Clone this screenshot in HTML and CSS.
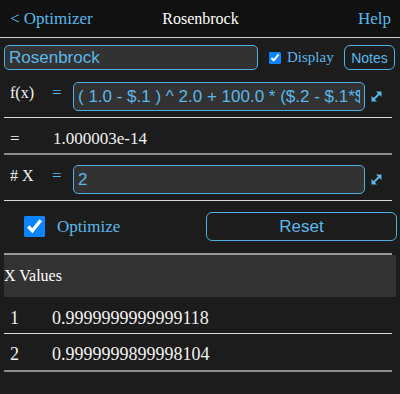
FILE: index.html
```html
<!DOCTYPE html>
<html>
<head>
<meta charset="utf-8">
<link rel="stylesheet" href="styles.css">
</head>
<body>
<header class="topbar">
  <a class="nav back">&lt; Optimizer</a>
  <span class="title">Rosenbrock</span>
  <a class="nav help">Help</a>
</header>
<main class="content">
  <div class="name-row">
    <input class="text-input name-input" type="text" value="Rosenbrock">
    <input class="display-check" type="checkbox" checked>
    <span class="display-label">Display</span>
    <button class="btn notes-btn">Notes</button>
  </div>
  <div class="field-row fx-row">
    <span class="label">f(x)</span>
    <span class="eq">=</span>
    <input class="text-input field-input" type="text" value="( 1.0 - $.1 ) ^ 2.0 + 100.0 * ($.2 - $.1*$.1) ^ 2.0">
    <span class="expand"><svg width="13" height="13" viewBox="0 0 13 13"><path d="M3.5 9.5 L9.5 3.5" stroke="#5bb8ea" stroke-width="1.8"/><path d="M11.5 1.5 V7 L6 1.5 Z M1.5 11.5 V6 L7 11.5 Z" fill="#5bb8ea"/></svg></span>
  </div>
  <div class="result-row">
    <span class="label">=</span>
    <span class="result">1.000003e-14</span>
  </div>
  <div class="field-row x-row">
    <span class="label"># X</span>
    <span class="eq">=</span>
    <input class="text-input field-input" type="text" value="2">
    <span class="expand"><svg width="13" height="13" viewBox="0 0 13 13"><path d="M3.5 9.5 L9.5 3.5" stroke="#5bb8ea" stroke-width="1.8"/><path d="M11.5 1.5 V7 L6 1.5 Z M1.5 11.5 V6 L7 11.5 Z" fill="#5bb8ea"/></svg></span>
  </div>
  <div class="opt-row">
    <input class="opt-check" type="checkbox" checked>
    <span class="opt-label">Optimize</span>
    <button class="btn reset-btn">Reset</button>
  </div>
  <div class="band">X Values</div>
  <div class="value-row first">
    <span class="label">1</span>
    <span class="value">0.9999999999999118</span>
  </div>
  <div class="value-row last">
    <span class="label">2</span>
    <span class="value">0.9999999899998104</span>
  </div>
</main>
</body>
</html>
```
FILE: styles.css
```css
html, body {
  margin: 0;
  padding: 0;
  background: #1c1c1c;
  color: #f2f2f2;
  font-family: "Liberation Serif", "Times New Roman", serif;
}
.topbar {
  display: grid;
  grid-template-columns: 1fr auto 1fr;
  align-items: center;
  height: 37px;
  padding: 0 9px 0 10px;
  background: #111111;
  border-bottom: 1px solid #cfcfcf;
}
.nav {
  color: #5bb8ea;
  font-size: 17px;
}
.help { justify-self: end; }
.title {
  font-size: 16px;
  color: #ffffff;
}
.content {
  padding: 0 8px 0 4px;
}
.text-input {
  box-sizing: border-box;
  background: #323232;
  border: 1px solid #4fb0e6;
  border-radius: 5px;
  color: #5bb8ea;
  font-family: "Liberation Sans", Arial, sans-serif;
  font-size: 17px;
  padding: 0 4px;
  margin: 0;
  outline: none;
}
.btn {
  box-sizing: border-box;
  background: transparent;
  border: 1px solid #4fb0e6;
  border-radius: 6px;
  color: #5bb8ea;
  font-family: "Liberation Sans", Arial, sans-serif;
  margin: 0;
  padding: 0;
}
.name-row {
  display: flex;
  align-items: center;
  margin-top: 7px;
  margin-right: -4px;
  height: 25px;
}
.name-input {
  width: 254px;
  height: 25px;
}
.display-check {
  width: 12px;
  height: 12px;
  margin: 0 0 0 11px;
  accent-color: #0b84ff;
}
.display-label {
  margin-left: 6px;
  color: #5bb8ea;
  font-size: 15px;
}
.notes-btn {
  margin-left: auto;
  margin-right: 1px;
  width: 51px;
  height: 25px;
  font-size: 14px;
}
.field-row {
  display: flex;
  align-items: center;
  border-bottom: 1px solid #dcdcdc;
}
.fx-row { padding: 12px 0 6px; }
.x-row { padding: 10px 0 6px; }
.label {
  box-sizing: border-box;
  width: 48px;
  padding-left: 6px;
  font-size: 16px;
  flex: none;
}
.field-row .label,
.field-row .eq {
  margin-bottom: 8px;
}
.eq {
  width: 21px;
  flex: none;
  color: #5bb8ea;
  font-size: 17px;
}
.field-input {
  flex: 1;
  min-width: 0;
  height: 29px;
}
.expand {
  width: 27px;
  flex: none;
  display: flex;
  padding-left: 5px;
  box-sizing: border-box;
}
.result-row {
  display: flex;
  align-items: center;
  height: 29px;
  padding-top: 6px;
  border-bottom: 2px solid #8c8c8c;
}
.result-row .label { font-size: 17px; }
.result {
  font-size: 17px;
  margin-left: 1px;
}
.opt-row {
  display: flex;
  align-items: center;
  padding: 11px 0 12px;
  border-bottom: 2px solid #9a9a9a;
}
.opt-check {
  width: 21px;
  height: 21px;
  margin: 0 0 0 20px;
  accent-color: #0b84ff;
}
.opt-label {
  margin-left: 12px;
  color: #5bb8ea;
  font-size: 17px;
}
.reset-btn {
  margin-left: auto;
  margin-right: -5px;
  width: 191px;
  height: 29px;
  font-size: 17px;
}
.band {
  display: flex;
  align-items: center;
  height: 42px;
  margin-right: -4px;
  background: #333333;
  font-size: 16px;
  color: #ffffff;
}
.value-row {
  display: flex;
  align-items: center;
  font-size: 18px;
}
.value-row .label { font-size: 18px; }
.value-row.first {
  height: 30px;
  padding-top: 6px;
  border-bottom: 1px solid #dcdcdc;
}
.value-row.last {
  height: 32px;
  padding-top: 4px;
  border-bottom: 2px solid #8c8c8c;
}
```
